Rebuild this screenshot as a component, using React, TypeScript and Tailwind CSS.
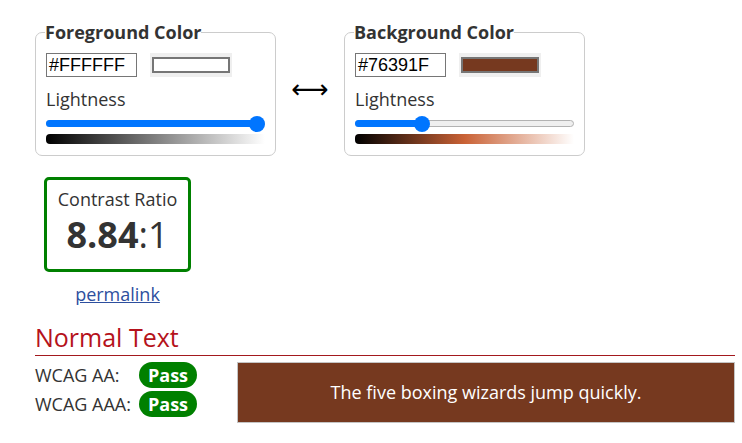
import React from "react";

const font = { fontFamily: '"Open Sans", "Liberation Sans", sans-serif' };

type PanelProps = {
  title: string;
  hex: string;
  swatch: string;
  pct: number;
  gradient: string;
};

function ColorPanel({ title, hex, swatch, pct, gradient }: PanelProps) {
  return (
    <fieldset className="w-[241px] border border-[#cccccc] rounded-[7px] px-[10px] pb-[11px]">
      <legend className="text-[18px] font-bold text-[#333] leading-[22px] -ml-px">{title}</legend>
      <div className="flex items-center mt-[10px]">
        <div className="w-[91px] h-[24px] border border-[#767676] flex items-center px-[2px] text-[18px] text-black font-['Liberation_Sans',sans-serif]">
          {hex}
        </div>
        <div className="ml-[13px] w-[82px] h-[24px] bg-[#efefef] px-[2px] py-[4px]">
          <div className="w-full h-full border-2 border-[#767676]" style={{ background: swatch }} />
        </div>
      </div>
      <div className="mt-[10px] text-[18px] text-[#333] leading-[24px]">Lightness</div>
      <div className="relative mt-[9px] h-[7px] rounded-full bg-[#efefef] border border-[#b2b2b2]">
        <div
          className="absolute -left-px -top-px h-[7px] rounded-full bg-[#0075ff]"
          style={{ width: `calc(${pct / 100} * (100% - 14px) + 10px)` }}
        />
        <div
          className="absolute top-1/2 w-[16px] h-[16px] -mt-[8px] rounded-full bg-[#0075ff]"
          style={{ left: `calc(${pct / 100} * (100% - 14px) - 1px)` }}
        />
      </div>
      <div className="mt-[7px] h-[10px] rounded-l-[4px]" style={{ background: gradient }} />
    </fieldset>
  );
}

function PassBadge() {
  return (
    <span className="inline-flex items-center justify-center w-[58px] h-[26px] rounded-full bg-[#008000] text-white font-bold text-[18px] leading-none">
      Pass
    </span>
  );
}

export default function App() {
  return (
    <div className="min-h-screen bg-white pl-[35px] pt-[21px] text-[#333]" style={font}>
      <div className="flex items-start">
        <ColorPanel
          title="Foreground Color"
          hex="#FFFFFF"
          swatch="#ffffff"
          pct={100}
          gradient="linear-gradient(to right, #000000, #ffffff)"
        />
        <div className="w-[68px] h-[135px] flex items-center justify-center pt-[2px] text-[26px] text-black font-['DejaVu_Sans',sans-serif]">
          ⟷
        </div>
        <ColorPanel
          title="Background Color"
          hex="#76391F"
          swatch="#76391f"
          pct={29}
          gradient="linear-gradient(to right, #000000, hsl(18, 58%, 50%), #ffffff)"
        />
      </div>

      <div className="ml-[9px] mt-[21px] w-[147px] flex flex-col items-center">
        <div className="w-full h-[95px] border-[3px] border-[#008000] rounded-[5px] flex flex-col items-center pt-[7px]">
          <div className="text-[18px] leading-[24px]">Contrast Ratio</div>
          <div className="text-[36px] leading-[48px] text-[#333]">
            <span className="font-bold">8.84</span>:1
          </div>
        </div>
        <a href="#" className="mt-[10px] text-[18px] text-[#2d4f9e] underline leading-[24px]">
          permalink
        </a>
      </div>

      <div className="w-[700px] mt-[14px]">
        <h2 className="text-[25px] text-[#b5121b] leading-[34px] border-b border-[#a3191e] pb-[1px]">Normal Text</h2>
        <div className="flex mt-[6px]">
          <div className="w-[202px] flex flex-col gap-[3px]">
            <div className="flex items-center h-[26px]">
              <span className="w-[104px] text-[18px]">WCAG AA:</span>
              <PassBadge />
            </div>
            <div className="flex items-center h-[26px]">
              <span className="w-[104px] text-[18px]">WCAG AAA:</span>
              <PassBadge />
            </div>
          </div>
          <div className="flex-1 h-[61px] bg-[#76391f] border border-[#c4c4c4] flex items-center justify-center text-white text-[18px]">
            The five boxing wizards jump quickly.
          </div>
        </div>
      </div>
    </div>
  );
}
